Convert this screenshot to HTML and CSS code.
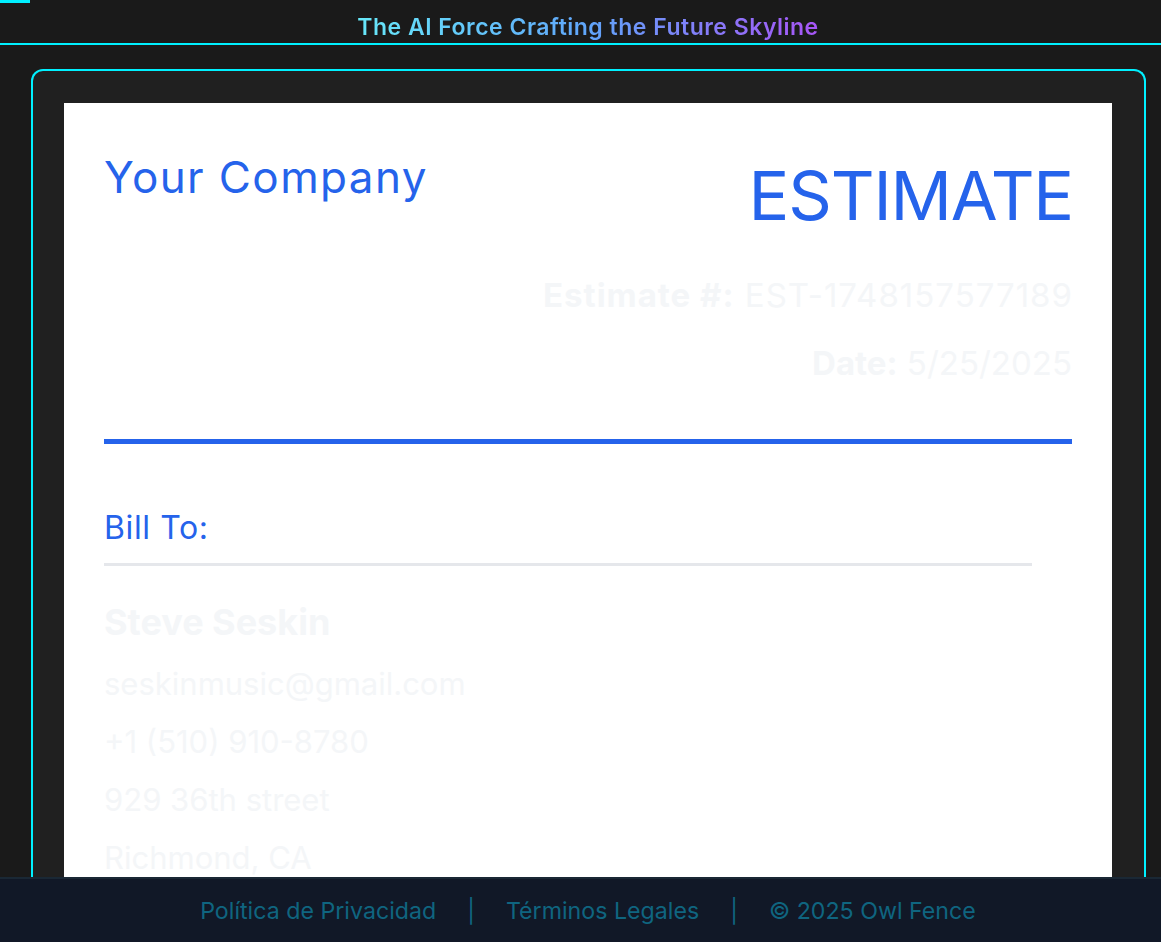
FILE: index.html
```html
<!DOCTYPE html>
<html lang="es">
<head>
<meta charset="utf-8">
<title>Estimate</title>
<link rel="stylesheet" href="styles.css">
</head>
<body>
<div class="page">
  <header class="site-header">
    <div class="topbar"><span class="topbar-mark"></span></div>
    <h1 class="tagline">The AI Force Crafting the Future Skyline</h1>
  </header>
  <main class="main">
    <section class="card">
      <article class="paper">
        <div class="doc-head">
          <h2 class="company">Your Company</h2>
          <div class="doc-meta">
            <h3 class="doc-title">ESTIMATE</h3>
            <p class="meta-line wide"><strong>Estimate #:</strong> EST-1748157577189</p>
            <p class="meta-line last"><strong>Date:</strong> 5/25/2025</p>
          </div>
        </div>
        <div class="bill">
          <h4 class="bill-title">Bill To:</h4>
          <p class="client-name">Steve Seskin</p>
          <p class="client-line">seskinmusic@gmail.com</p>
          <p class="client-line">+1 (510) 910-8780</p>
          <p class="client-line">929 36th street</p>
          <p class="client-line">Richmond, CA</p>
        </div>
      </article>
    </section>
  </main>
  <footer class="site-footer">
    <a class="foot-link" href="#">Política de Privacidad</a>
    <span class="foot-sep">|</span>
    <a class="foot-link" href="#">Términos Legales</a>
    <span class="foot-sep">|</span>
    <span class="foot-link">© 2025 Owl Fence</span>
  </footer>
</div>
</body>
</html>
```

FILE: styles.css
```css
* { box-sizing: border-box; }
html, body { margin: 0; padding: 0; }
body {
  background: #1a1a1a;
  font-family: Inter, "Liberation Sans", sans-serif;
  overflow: hidden;
}
.page {
  height: 100vh;
  display: flex;
  flex-direction: column;
}
.site-header {
  background: #1a1a1a;
  border-bottom: 2px solid #00f0ff;
  padding: 0 0 3px 15px;
  flex: none;
}
.topbar { height: 3px; display: flex; margin-left: -15px; }
.topbar-mark { width: 30px; height: 3px; background: #00f0ff; }
.tagline {
  margin: 11px auto 0;
  width: max-content;
  text-align: center;
  font-size: 23px;
  line-height: 26px;
  font-weight: 600;
  letter-spacing: 0.5px;
  background: linear-gradient(90deg, #67e8f9 0%, #60a5fa 50%, #a855f7 100%);
  -webkit-background-clip: text;
  background-clip: text;
  color: transparent;
}
.main {
  flex: 1;
  min-height: 0;
  overflow: hidden;
  padding: 24px 15px 0 31px;
}
.card {
  border: 2px solid #00f0ff;
  border-bottom: none;
  border-radius: 12px 12px 0 0;
  background: #202020;
  padding: 32px 32px 0 31px;
  min-height: 100%;
}
.paper {
  background: #ffffff;
  padding: 48px 40px 40px;
}
.doc-head {
  display: flex;
  justify-content: space-between;
  align-items: flex-start;
  border-bottom: 5px solid #2563eb;
  padding-bottom: 51px;
}
.company {
  margin: 0;
  font-size: 44px;
  line-height: 1.2;
  font-weight: 400;
  color: #2563eb;
  letter-spacing: 1.4px;
}
.doc-meta { text-align: right; }
.doc-title {
  margin: 4px -1px 33px 0;
  font-size: 68px;
  line-height: 1.2;
  font-weight: 400;
  color: #2563eb;
  letter-spacing: -1.2px;
}
.meta-line {
  margin: 0 0 18px;
  font-size: 33px;
  line-height: 50px;
  color: #f4f6f8;
}
.meta-line.wide { letter-spacing: 1px; margin-right: -1px; }
.meta-line.last { margin-bottom: 0; }
.meta-line strong { font-weight: 700; }
.bill { padding-top: 65px; }
.bill-title {
  margin: 0 40px 0 0;
  font-size: 32px;
  line-height: 1.2;
  font-weight: 400;
  color: #2563eb;
  letter-spacing: 0.6px;
  padding-bottom: 16px;
  border-bottom: 3px solid #e5e7eb;
}
.client-name {
  margin: 35px 0 11px;
  font-size: 36px;
  line-height: 1.2;
  font-weight: 700;
  color: #f4f6f8;
}
.client-line {
  margin: 0;
  font-size: 31px;
  line-height: 58px;
  color: #f4f6f8;
}
.site-footer {
  flex: none;
  height: 65px;
  background: #111827;
  border-top: 2px solid #1a2835;
  display: flex;
  justify-content: center;
  align-items: center;
  gap: 31px;
  padding-left: 15px;
  font-size: 23.2px;
  color: #0f6580;
}
.foot-link { color: #0f6580; text-decoration: none; }
.foot-sep { color: #0f6580; }
```
